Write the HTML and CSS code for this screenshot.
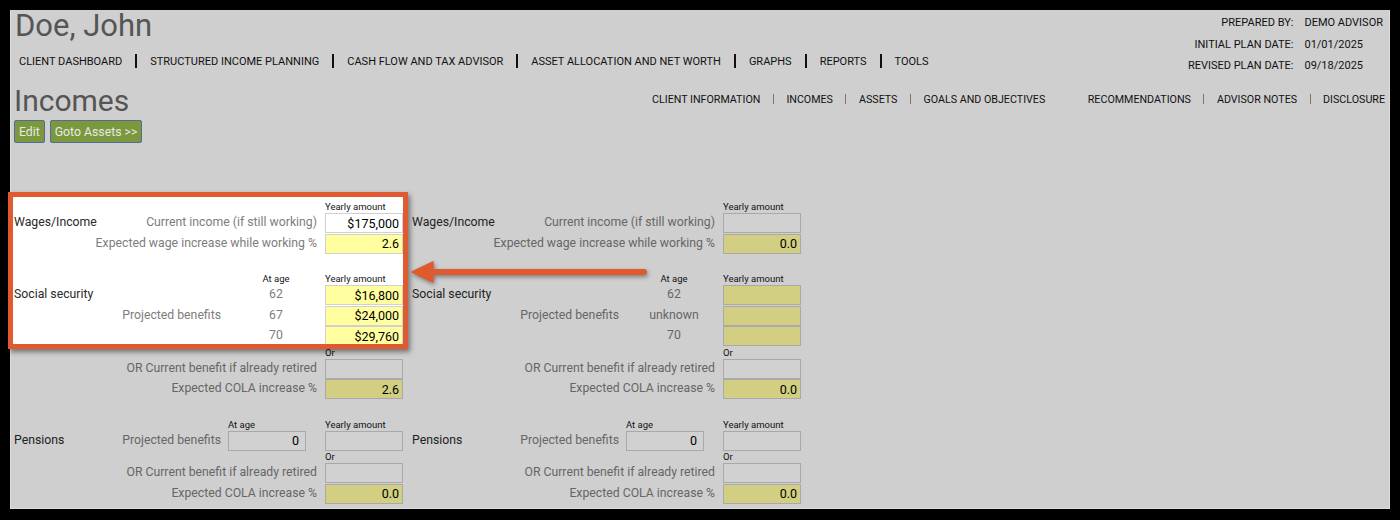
FILE: index.html
```html
<!DOCTYPE html>
<html>
<head>
    <title>Incomes - Doe, John</title>
    <link rel="stylesheet" href="styles.css">
</head>
<body>
    <div class="page">
        <div class="top">
            <div class="top-left">
                <div class="client-name">Doe, John</div>
                <nav class="main-nav">
                    <a href="#">CLIENT DASHBOARD</a><span class="sep"></span>
                    <a href="#">STRUCTURED INCOME PLANNING</a><span class="sep"></span>
                    <a href="#">CASH FLOW AND TAX ADVISOR</a><span class="sep"></span>
                    <a href="#">ASSET ALLOCATION AND NET WORTH</a><span class="sep"></span>
                    <a href="#">GRAPHS</a><span class="sep"></span>
                    <a href="#">REPORTS</a><span class="sep"></span>
                    <a href="#">TOOLS</a>
                </nav>
            </div>
            <div class="plan-info">
                <span class="info-label">PREPARED BY:</span><span>DEMO ADVISOR</span>
                <span class="info-label">INITIAL PLAN DATE:</span><span>01/01/2025</span>
                <span class="info-label">REVISED PLAN DATE:</span><span>09/18/2025</span>
            </div>
        </div>

        <div class="title-row">
            <h1 class="page-title">Incomes</h1>
            <nav class="sub-nav">
                <a href="#">CLIENT INFORMATION</a><span class="sep"></span>
                <a href="#">INCOMES</a><span class="sep"></span>
                <a href="#">ASSETS</a><span class="sep"></span>
                <a href="#">GOALS AND OBJECTIVES</a>
                <a href="#" class="spaced">RECOMMENDATIONS</a><span class="sep"></span>
                <a href="#">ADVISOR NOTES</a><span class="sep"></span>
                <a href="#">DISCLOSURE</a>
            </nav>
        </div>

        <div class="actions">
            <button class="btn">Edit</button>
            <button class="btn">Goto Assets &gt;&gt;</button>
        </div>

        <div class="income-form">
            <!-- Client -->
            <div class="income-col">
                <div class="section">
                    <div class="row-cap"><span class="cap-amt">Yearly amount</span></div>
                    <div class="row">
                        <span class="cat">Wages/Income</span>
                        <span class="desc">Current income (if still working)</span>
                        <input class="field amt" value="$175,000" readonly>
                    </div>
                    <div class="row">
                        <span class="desc wide">Expected wage increase while working %</span>
                        <input class="field olive amt" value="2.6" readonly>
                    </div>
                </div>
                <div class="section">
                    <div class="row-cap"><span class="cap-age">At age</span><span class="cap-amt">Yearly amount</span></div>
                    <div class="row">
                        <span class="cat">Social security</span>
                        <span class="age">62</span>
                        <input class="field olive amt" value="$16,800" readonly>
                    </div>
                    <div class="row">
                        <span class="desc short">Projected benefits</span>
                        <span class="age">67</span>
                        <input class="field olive amt" value="$24,000" readonly>
                    </div>
                    <div class="row">
                        <span class="age">70</span>
                        <input class="field olive amt" value="$29,760" readonly>
                    </div>
                    <div class="row-cap"><span class="cap-amt">Or</span></div>
                    <div class="row">
                        <span class="desc wide">OR Current benefit if already retired</span>
                        <input class="field amt" value="" readonly>
                    </div>
                    <div class="row">
                        <span class="desc wide">Expected COLA increase %</span>
                        <input class="field olive amt" value="2.6" readonly>
                    </div>
                </div>
                <div class="section">
                    <div class="row-cap"><span class="cap-age left">At age</span><span class="cap-amt">Yearly amount</span></div>
                    <div class="row">
                        <span class="cat">Pensions</span>
                        <span class="desc short">Projected benefits</span>
                        <input class="field age-box" value="0" readonly>
                        <input class="field amt" value="" readonly>
                    </div>
                    <div class="row-cap"><span class="cap-amt">Or</span></div>
                    <div class="row">
                        <span class="desc wide">OR Current benefit if already retired</span>
                        <input class="field amt" value="" readonly>
                    </div>
                    <div class="row">
                        <span class="desc wide">Expected COLA increase %</span>
                        <input class="field olive amt" value="0.0" readonly>
                    </div>
                </div>
            </div>

            <!-- Spouse -->
            <div class="income-col">
                <div class="section">
                    <div class="row-cap"><span class="cap-amt">Yearly amount</span></div>
                    <div class="row">
                        <span class="cat">Wages/Income</span>
                        <span class="desc">Current income (if still working)</span>
                        <input class="field amt" value="" readonly>
                    </div>
                    <div class="row">
                        <span class="desc wide">Expected wage increase while working %</span>
                        <input class="field olive amt" value="0.0" readonly>
                    </div>
                </div>
                <div class="section">
                    <div class="row-cap"><span class="cap-age">At age</span><span class="cap-amt">Yearly amount</span></div>
                    <div class="row">
                        <span class="cat">Social security</span>
                        <span class="age">62</span>
                        <input class="field olive amt" value="" readonly>
                    </div>
                    <div class="row">
                        <span class="desc short">Projected benefits</span>
                        <span class="age">unknown</span>
                        <input class="field olive amt" value="" readonly>
                    </div>
                    <div class="row">
                        <span class="age">70</span>
                        <input class="field olive amt" value="" readonly>
                    </div>
                    <div class="row-cap"><span class="cap-amt">Or</span></div>
                    <div class="row">
                        <span class="desc wide">OR Current benefit if already retired</span>
                        <input class="field amt" value="" readonly>
                    </div>
                    <div class="row">
                        <span class="desc wide">Expected COLA increase %</span>
                        <input class="field olive amt" value="0.0" readonly>
                    </div>
                </div>
                <div class="section">
                    <div class="row-cap"><span class="cap-age left">At age</span><span class="cap-amt">Yearly amount</span></div>
                    <div class="row">
                        <span class="cat">Pensions</span>
                        <span class="desc short">Projected benefits</span>
                        <input class="field age-box" value="0" readonly>
                        <input class="field amt" value="" readonly>
                    </div>
                    <div class="row-cap"><span class="cap-amt">Or</span></div>
                    <div class="row">
                        <span class="desc wide">OR Current benefit if already retired</span>
                        <input class="field amt" value="" readonly>
                    </div>
                    <div class="row">
                        <span class="desc wide">Expected COLA increase %</span>
                        <input class="field olive amt" value="0.0" readonly>
                    </div>
                </div>
            </div>
        </div>
    </div>

    <!-- Annotation overlay -->
    <div class="callout-box"></div>
    <svg class="callout-arrow" viewBox="0 0 244 28" width="244" height="28">
        <line x1="22" y1="14" x2="236" y2="14" stroke="#e05a30" stroke-width="6" stroke-linecap="round"/>
        <path d="M4,14 L25,4 L25,24 Z" fill="#e05a30" stroke="#e05a30" stroke-width="1.5" stroke-linejoin="round"/>
    </svg>
</body>
</html>
```

FILE: styles.css
```css
body {
    margin: 0;
    background-color: #000;
    font-family: Roboto, "Liberation Sans", sans-serif;
    color: #111;
    position: relative;
    height: 520px;
    overflow: hidden;
}
.page {
    position: absolute;
    left: 10px;
    top: 10px;
    width: 1380px;
    height: 499px;
    box-sizing: border-box;
    background-color: #cfcfcf;
    border: 1px solid #dedede;
    border-top: 0;
    padding: 0 4px 0 3px;
}
.top {
    display: flex;
    justify-content: space-between;
    height: 60px;
}
.client-name {
    font-size: 31px;
    line-height: 30px;
    color: #555;
    margin-left: 1px;
    margin-top: 1px;
}
.main-nav {
    display: flex;
    align-items: center;
    gap: 13px;
    margin-top: 11px;
    margin-left: 5px;
    height: 18px;
    font-size: 11px;
}
.main-nav a,
.sub-nav a {
    color: #111;
    text-decoration: none;
}
.main-nav .sep {
    width: 2px;
    height: 14px;
    background-color: #111;
}
.plan-info {
    display: grid;
    grid-template-columns: auto auto;
    column-gap: 11px;
    padding-top: 2px;
    margin-right: 2px;
    font-size: 11px;
    line-height: 21.5px;
    align-self: flex-start;
}
.info-label {
    text-align: right;
}
.title-row {
    display: flex;
    justify-content: space-between;
    align-items: flex-start;
    margin-top: 16px;
}
.page-title {
    margin: 0;
    font-size: 30px;
    line-height: 30px;
    font-weight: 400;
    color: #555;
}
.sub-nav {
    display: flex;
    align-items: center;
    gap: 12.5px;
    padding-top: 4px;
    height: 18px;
    font-size: 10.7px;
}
.sub-nav .sep {
    width: 1px;
    height: 10px;
    background-color: #777;
}
.sub-nav .spaced {
    margin-left: 30px;
}
.actions {
    display: flex;
    gap: 5px;
    margin-top: 4px;
}
.btn {
    height: 23px;
    padding: 0 4px;
    font-family: Roboto, "Liberation Sans", sans-serif;
    font-size: 12.25px;
    color: #e8e8e8;
    background-color: #7a983c;
    border: 1px solid #55699a;
    border-radius: 2px;
    cursor: pointer;
}
.income-form {
    display: flex;
    gap: 9px;
    margin-top: 58px;
}
.income-col {
    width: 389px;
}
.section + .section {
    margin-top: 19px;
}
.row,
.row-cap {
    display: grid;
    grid-template-columns: 90px 117px 104px 78px;
    white-space: nowrap;
}
.row {
    height: 20.5px;
    font-size: 12.25px;
    line-height: 19px;
}
.row-cap {
    height: 12px;
    font-size: 9.5px;
    line-height: 12px;
    color: #111;
}
.cap-age {
    grid-column: 3;
    text-align: center;
    padding-left: 6px;
}
.cap-age.left {
    text-align: left;
    padding-left: 7px;
}
.cap-amt {
    grid-column: 4;
}
.cat {
    grid-column: 1;
    color: #222;
}
.desc {
    grid-column: 2 / 4;
    text-align: right;
    padding-right: 8px;
    color: #666;
}
.desc.wide {
    grid-column: 1 / 4;
}
.desc.short {
    grid-column: 2;
    padding-right: 0;
}
.age {
    grid-column: 3;
    text-align: center;
    padding-left: 6px;
    color: #666;
}
.field {
    width: 78px;
    height: 20px;
    box-sizing: border-box;
    margin: 0;
    padding: 0 3px;
    border: 1px solid #a9a9a9;
    background-color: #d1d1d1;
    font-family: Roboto, "Liberation Sans", sans-serif;
    font-size: 12.5px;
    color: #000;
    text-align: right;
    outline: none;
}
.field.olive {
    background-color: #d2cf82;
}
.amt {
    grid-column: 4;
}
.age-box {
    grid-column: 3;
    margin-left: 7px;
    padding-right: 6px;
}
.callout-box {
    position: absolute;
    left: 8px;
    top: 192px;
    width: 400px;
    height: 157px;
    box-sizing: border-box;
    border: 5px solid #e05a30;
    box-shadow: 2px 3px 5px rgba(0, 0, 0, 0.45);
    backdrop-filter: brightness(1.232);
    pointer-events: none;
}
.callout-arrow {
    position: absolute;
    left: 408px;
    top: 258px;
    filter: drop-shadow(1px 2px 2px rgba(0, 0, 0, 0.4));
    pointer-events: none;
}
```
